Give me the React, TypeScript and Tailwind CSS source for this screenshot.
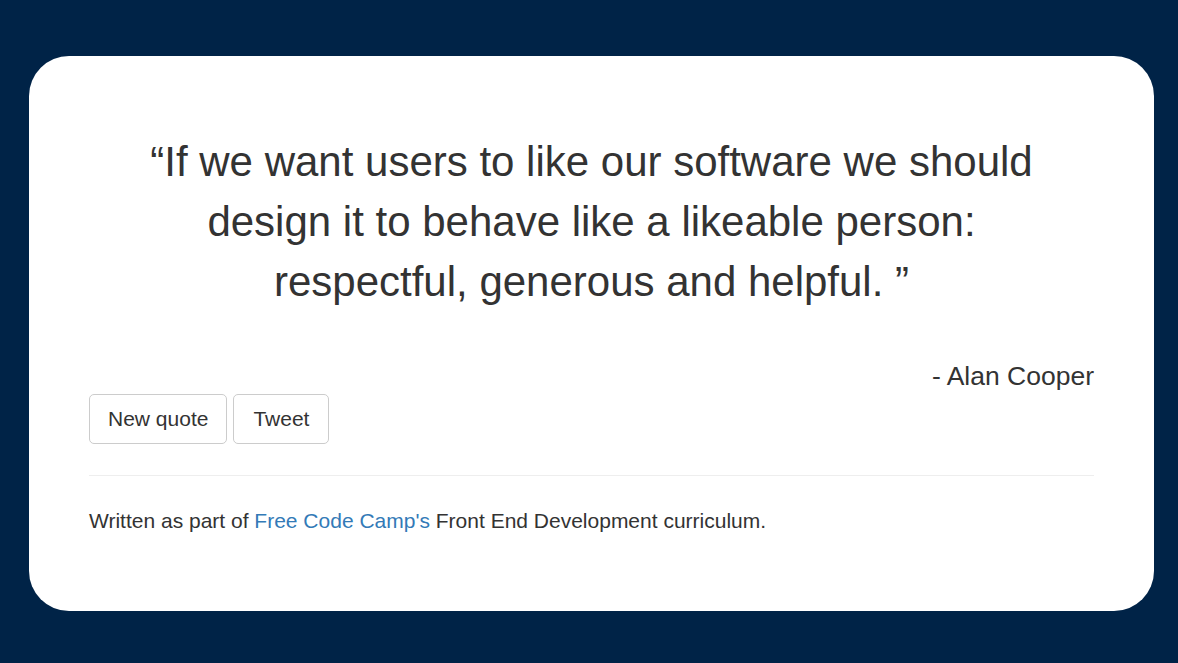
export default function App() {
  return (
    <main
      className="min-h-[663px] w-full bg-[#002347] pt-[56px] pl-[29px]"
      style={{ fontFamily: '"Liberation Sans", Arial, sans-serif' }}
    >
      <div className="w-[1125px] rounded-[40px] bg-white px-[60px] pt-[76px] pb-[75px] text-[#333333]">
        <p className="px-[40px] text-center text-[42px] leading-[60px]">
          “If we want users to like our software we should design it to behave
          like a likeable person: respectful, generous and helpful. ”
        </p>
        <p className="mt-[46px] text-right text-[26.5px] leading-[36px]">
          - Alan Cooper
        </p>
        <div className="flex gap-[6px]">
          <button className="flex h-[50px] items-center rounded-[5px] border border-[#cccccc] bg-white px-[18px] text-[21px] text-[#333333]">
            New quote
          </button>
          <button className="flex h-[50px] items-center rounded-[5px] border border-[#cccccc] bg-white px-[19px] text-[21px] text-[#333333]">
            Tweet
          </button>
        </div>
        <hr className="mt-[31px] mb-[30px] border-t border-[#eeeeee]" />
        <p className="text-[21px] leading-[30px]">
          Written as part of{" "}
          <a href="#" className="text-[#337ab7]">
            Free Code Camp's
          </a>{" "}
          Front End Development curriculum.
        </p>
      </div>
    </main>
  );
}
